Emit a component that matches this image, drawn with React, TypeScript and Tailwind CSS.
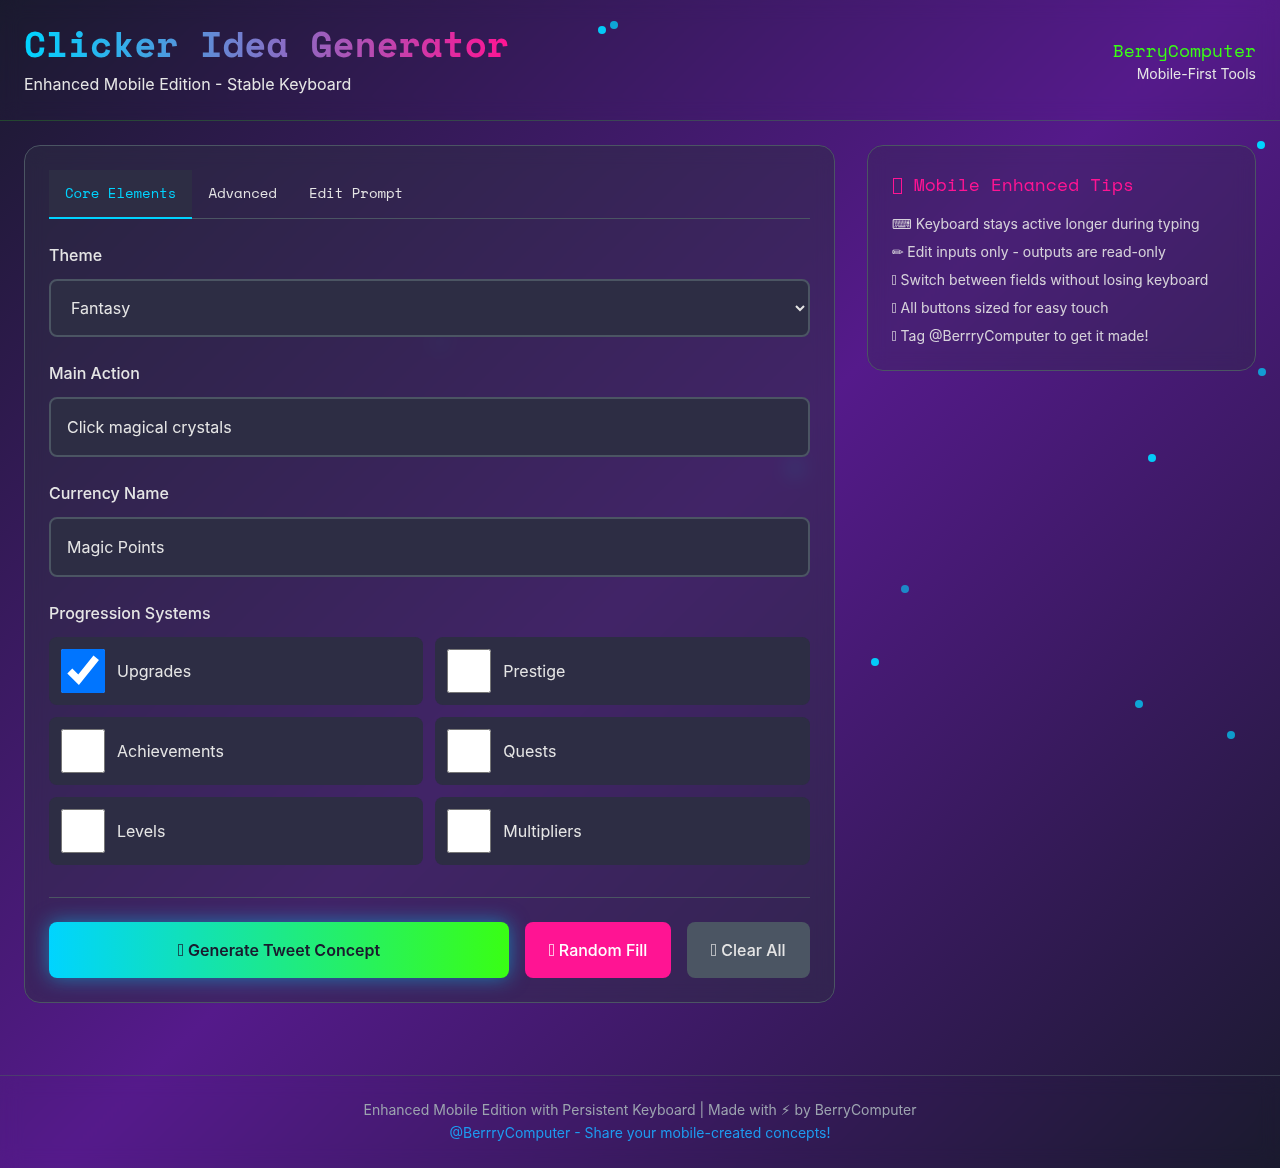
import React from "react";

const mono = "font-['Space_Mono',monospace]";

const dots = [
	{ x: 602, y: 30, o: 0.95 },
	{ x: 614, y: 25, o: 0.75 },
	{ x: 1261, y: 145, o: 1 },
	{ x: 1262, y: 372, o: 0.7 },
	{ x: 1152, y: 458, o: 0.95 },
	{ x: 905, y: 589, o: 0.6 },
	{ x: 875, y: 662, o: 0.95 },
	{ x: 1139, y: 704, o: 0.75 },
	{ x: 1231, y: 735, o: 0.7 },
	{ x: 795, y: 468, o: 1 },
	{ x: 440, y: 342, o: 0.4 },
];

const systems = ["Upgrades", "Prestige", "Achievements", "Quests", "Levels", "Multipliers"];

// emoji show as empty missing-glyph boxes in the reference
function Tofu({ className }: { className: string }) {
	return <span className={`inline-block border border-current ${className}`} />;
}

const smallTofu = <Tofu className="w-[4px] h-[10px] mr-px opacity-70" />;
const btnTofu = <Tofu className="w-[5px] h-[12px] mr-px opacity-70" />;

const tips = [
	<>{"\u2328"} Keyboard stays active longer during typing</>,
	<>{"\u270F"} Edit inputs only - outputs are read-only</>,
	<>{smallTofu} Switch between fields without losing keyboard</>,
	<>{smallTofu} All buttons sized for easy touch</>,
	<>{smallTofu} Tag @BerrryComputer to get it made!</>,
];

function Field({ label, value }: { label: string; value: string }) {
	return (
		<div className="mb-6">
			<label className="block mb-3 h-6 font-medium text-[#e5e5e5]">{label}</label>
			<input
				defaultValue={value}
				className="block w-full h-[60px] px-4 rounded-lg border-2 border-[#4b5563] bg-[#2d2d44] text-base text-[#e5e5e5]"
			/>
		</div>
	);
}

export default function App() {
	return (
		<div className="relative min-h-[1168px] overflow-hidden bg-[linear-gradient(135deg,#1a1a2e_0%,#551a8b_50%,#1a1a2e_100%)] font-['Inter','DejaVu_Sans',sans-serif] text-[#e5e5e5]">
			<header className="flex justify-between items-center h-[121px] px-6 border-b border-[#39ff14]/20 backdrop-blur-[10px]">
				<div>
					<h1 className={`w-fit text-4xl leading-[39px] font-bold bg-[linear-gradient(90deg,#00d4ff,#ff1493)] bg-clip-text text-transparent ${mono}`}>
						Clicker Idea Generator
					</h1>
					<p className="mt-[9px] text-base leading-6 text-[#e5e5e5]">Enhanced Mobile Edition - Stable Keyboard</p>
				</div>
				<div className="text-right">
					<div className={`pt-px text-lg leading-[27px] text-[#39ff14] ${mono}`}>BerryComputer</div>
					<div className="text-sm leading-[20px]">Mobile-First Tools</div>
				</div>
			</header>

			{dots.map((d) => (
				<div
					key={d.x}
					className="absolute w-2 h-2 rounded-full bg-[#00d4ff] -translate-x-1/2 -translate-y-1/2"
					style={{ left: d.x, top: d.y, opacity: d.o }}
				/>
			))}

			<main className="relative flex items-start gap-8 px-6 pt-6">
				<section className="w-[810.67px] p-6 rounded-2xl border border-[#4b5563] bg-[#2d2d44]/50 backdrop-blur-[10px]">
					<div className={`flex h-[49px] mb-6 border-b border-[#4b5563] text-sm ${mono}`}>
						<div className="flex items-center h-[49px] px-4 pb-px bg-[#2d2d44] border-b-2 border-[#00d4ff] text-[#00d4ff]">Core Elements</div>
						<div className="flex items-center h-[48px] px-4 pb-[2px]">Advanced</div>
						<div className="flex items-center h-[48px] px-4 pb-[2px]">Edit Prompt</div>
					</div>

					<div className="mb-6">
						<label className="block mb-3 h-6 font-medium">Theme</label>
						<select
							defaultValue="Fantasy"
							className="block w-full h-[58px] px-4 rounded-lg border-2 border-[#4b5563] bg-[#2d2d44] text-base text-[#e5e5e5]"
						>
							<option>Fantasy</option>
						</select>
					</div>
					<Field label="Main Action" value="Click magical crystals" />
					<Field label="Currency Name" value="Magic Points" />

					<label className="block mb-3 h-6 font-medium">Progression Systems</label>
					<div className="grid grid-cols-2 gap-3">
						{systems.map((s, i) => (
							<label key={s} className="flex items-center gap-3 h-[68px] p-3 rounded-lg bg-[#2d2d44]">
								<input type="checkbox" defaultChecked={i === 0} className="w-11 h-11" />
								<span>{s}</span>
							</label>
						))}
					</div>

					<div className="flex gap-4 mt-8 pt-6 border-t border-[#4b5563]">
						<button className="w-[460px] h-14 rounded-lg bg-[linear-gradient(90deg,#00d4ff,#39ff14)] shadow-[0_0_20px_rgba(0,212,255,0.5)] font-semibold text-[#1a1a2e]">
							{btnTofu} Generate Tweet Concept
						</button>
						<button className="w-[146px] h-14 rounded-lg bg-[#ff1493] font-medium text-white">{btnTofu} Random Fill</button>
						<button className="flex-1 h-14 rounded-lg bg-[#4b5563] font-medium text-[#e5e5e5]">{btnTofu} Clear All</button>
					</div>
				</section>

				<aside className="flex-1 p-6 rounded-2xl border border-[#4b5563] bg-[#2d2d44]/30 backdrop-blur-[10px]">
					<h3 className={`mb-[15px] pt-px text-lg leading-[27px] text-[#ff1493] ${mono}`}>
						<Tofu className="w-[9px] h-[16px] ml-px mr-px -mb-[3px]" /> Mobile Enhanced Tips
					</h3>
					<ul className="flex flex-col gap-[7px] text-sm leading-[21px] text-[#e5e5e5]/90">
						{tips.map((t, i) => (
							<li key={i}>{t}</li>
						))}
					</ul>
				</aside>
			</main>

			<footer className="absolute bottom-0 inset-x-0 h-[93px] pt-[22px] border-t border-[#4b5563]/60 text-center text-sm leading-[23px] backdrop-blur-[10px]">
				<p className="text-[#9ca3af]">Enhanced Mobile Edition with Persistent Keyboard | Made with {"\u26A1\uFE0E"} by BerryComputer</p>
				<p className="text-[#1d9bf0]">@BerrryComputer - Share your mobile-created concepts!</p>
			</footer>
		</div>
	);
}
